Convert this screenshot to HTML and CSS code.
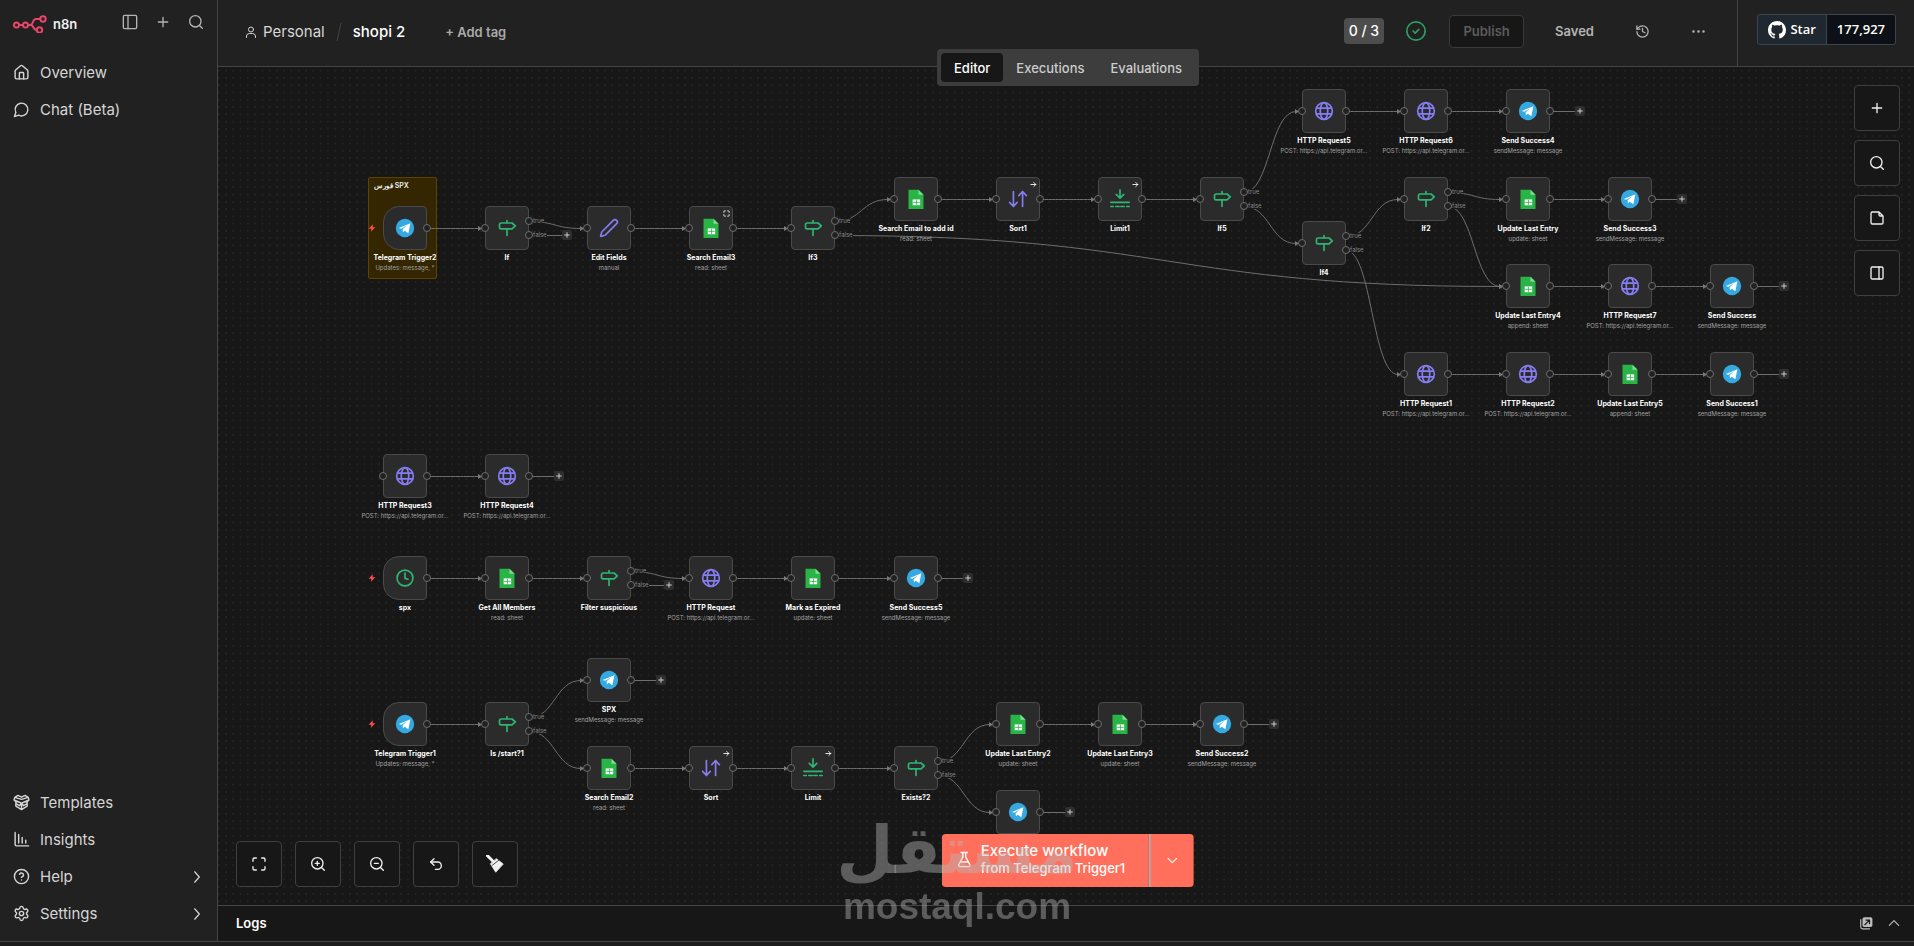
FILE: index.html
```html
<!DOCTYPE html>
<html lang="en">
<head>
<meta charset="utf-8">
<title>shopi 2 - n8n</title>
<meta name="viewport" content="width=device-width, initial-scale=1">
<link rel="stylesheet" href="styles.css">
</head>
<body>
<svg class="sprite" aria-hidden="true">
  <symbol id="i-panel" viewBox="0 0 24 24"><rect x="2" y="2" width="20" height="20" rx="2"/><path d="M9 2v20"/></symbol>
  <symbol id="i-panel-right" viewBox="0 0 24 24"><rect x="3" y="3" width="18" height="18" rx="2"/><path d="M15 3v18"/></symbol>
  <symbol id="i-plus" viewBox="0 0 24 24"><path d="M5 12h14M12 5v14"/></symbol>
  <symbol id="i-search" viewBox="0 0 24 24"><circle cx="11" cy="11" r="8.5"/><path d="m21.5 21.5-4.3-4.3"/></symbol>
  <symbol id="i-home" viewBox="0 0 24 24"><path d="M15 21v-8a1 1 0 0 0-1-1h-4a1 1 0 0 0-1 1v8"/><path d="M3 10a2 2 0 0 1 .7-1.5l7-6a2 2 0 0 1 2.6 0l7 6A2 2 0 0 1 21 10v9a2 2 0 0 1-2 2H5a2 2 0 0 1-2-2z"/></symbol>
  <symbol id="i-chat" viewBox="0 0 24 24"><path d="M7.9 20A9 9 0 1 0 4 16.1L2 22Z"/></symbol>
  <symbol id="i-box" viewBox="0 0 24 24"><path d="M12 13v9M2.5 9.5 12 13l9.500-3.500M12 7.500 2.500 4.800 7 2l5 2.500L17 2l4.500 2.800zM2.500 4.800 1.500 8.500 12 13 22.500 8.500l-1-3.700M4 10v7l8 5 8-5v-7M4 13.500l5 3 3-3.500 3 3.500 5-3"/></symbol>
  <symbol id="i-chart" viewBox="0 0 24 24"><path d="M3 2v17a2 2 0 0 0 2 2h17M8 17V5M13 17V9M18 17v-4"/></symbol>
  <symbol id="i-help" viewBox="0 0 24 24"><circle cx="12" cy="12" r="10"/><path d="M9.100 9a3 3 0 0 1 5.800 1c0 2-3 3-3 3M12 17h.01"/></symbol>
  <symbol id="i-gear" viewBox="0 0 24 24"><path d="M9.700 4.100a2.340 2.340 0 0 1 4.660 0 2.340 2.340 0 0 0 3.320 1.900 2.340 2.340 0 0 1 2.330 4.030 2.340 2.340 0 0 0 0 3.830 2.340 2.340 0 0 1-2.330 4.030 2.340 2.340 0 0 0-3.320 1.920 2.340 2.340 0 0 1-4.660 0 2.340 2.340 0 0 0-3.320-1.920 2.340 2.340 0 0 1-2.330-4.030 2.340 2.340 0 0 0 0-3.830A2.340 2.340 0 0 1 6.380 6a2.340 2.340 0 0 0 3.320-1.900"/><circle cx="12" cy="12" r="3"/></symbol>
  <symbol id="i-right" viewBox="0 0 24 24"><path d="m8 3 8 9-8 9"/></symbol>
  <symbol id="i-down" viewBox="0 0 24 24"><path d="m4 8 8 8 8-8"/></symbol>
  <symbol id="i-up" viewBox="0 0 24 24"><path d="m4 16 8-8 8 8"/></symbol>
  <symbol id="i-user" viewBox="0 0 24 24"><circle cx="12" cy="7" r="5"/><path d="M3 23v-3a6 6 0 0 1 6-5h6a6 6 0 0 1 6 5v3"/></symbol>
  <symbol id="i-check" viewBox="0 0 24 24"><circle cx="12" cy="12" r="11"/><path d="m8.500 12 2.500 2.500 4.500-4.500"/></symbol>
  <symbol id="i-history" viewBox="0 0 24 24"><path d="M3 12a9 9 0 1 0 9-9 9.750 9.750 0 0 0-6.740 2.740L3 8"/><path d="M3 3v5h5M12 7v5l4 2"/></symbol>
  <symbol id="i-dots" viewBox="0 0 24 24"><circle cx="4" cy="12" r="1"/><circle cx="12" cy="12" r="1"/><circle cx="20" cy="12" r="1"/></symbol>
  <symbol id="i-github" viewBox="0 0 16 16"><path fill="currentColor" stroke="none" d="M8 0c4.42 0 8 3.58 8 8a8.013 8.013 0 0 1-5.45 7.59c-.4.08-.55-.17-.55-.38 0-.27.01-1.13.01-2.2 0-.75-.25-1.23-.54-1.48 1.78-.2 3.65-.88 3.65-3.95 0-.88-.31-1.59-.82-2.15.08-.2.36-1.02-.08-2.12 0 0-.67-.22-2.2.82-.64-.18-1.32-.27-2-.27-.68 0-1.36.09-2 .27-1.53-1.03-2.2-.82-2.2-.82-.44 1.1-.16 1.92-.08 2.12-.51.56-.82 1.28-.82 2.15 0 3.06 1.86 3.75 3.64 3.95-.23.2-.44.55-.51 1.07-.46.21-1.61.55-2.33-.66-.15-.24-.6-.83-1.23-.82-.67.01-.27.38.01.53.34.19.73.9.82 1.13.16.45.68 1.31 2.69.94 0 .67.01 1.3.01 1.49 0 .21-.15.45-.55.38A7.995 7.995 0 0 1 0 8c0-4.42 3.58-8 8-8Z"/></symbol>
  <symbol id="i-note" viewBox="0 0 24 24"><path d="M15 3H5a2 2 0 0 0-2 2v14a2 2 0 0 0 2 2h14a2 2 0 0 0 2-2V9zM15 3v4a2 2 0 0 0 2 2h4"/></symbol>
  <symbol id="i-expand" viewBox="0 0 24 24"><path d="M3 8V5a2 2 0 0 1 2-2h3M16 3h3a2 2 0 0 1 2 2v3M21 16v3a2 2 0 0 1-2 2h-3M8 21H5a2 2 0 0 1-2-2v-3"/></symbol>
  <symbol id="i-zoom-in" viewBox="0 0 24 24"><circle cx="11" cy="11" r="8.500"/><path d="m21.500 21.500-4.300-4.300M11 8v6M8 11h6"/></symbol>
  <symbol id="i-zoom-out" viewBox="0 0 24 24"><circle cx="11" cy="11" r="8.500"/><path d="m21.500 21.500-4.300-4.300M8 11h6"/></symbol>
  <symbol id="i-undo" viewBox="0 0 24 24"><path d="M9 14 4 9l5-5"/><path d="M4 9h10.500a5.500 5.500 0 0 1 0 11H11"/></symbol>
  <symbol id="i-broom" viewBox="0 0 24 24"><path d="m2 1 7 7" stroke-width="4"/><path d="m6 12 7 11 10-11-9-7z" fill="currentColor" stroke-width="1"/><path d="m8 14 9-7" class="broom-gap"/></symbol>
  <symbol id="i-flask" viewBox="0 0 24 24"><path d="M14 2v6a2 2 0 0 0 .245.960l5.510 10.080A2 2 0 0 1 18 22H6a2 2 0 0 1-1.755-2.960l5.510-10.080A2 2 0 0 0 10 8V2M6.500 15.500h11M7.500 2h9"/></symbol>
  <symbol id="i-popout" viewBox="0 0 24 24"><path d="M3 6v13a3 3 0 0 0 3 3h12"/><rect x="6" y="2" width="17" height="17" rx="3" fill="currentColor" stroke="none"/><path class="popout-arrow" d="m10 15 8-8M12 7h6v6"/></symbol>
  <symbol id="i-bolt" viewBox="0 0 24 24"><path fill="currentColor" stroke="none" d="M14 1 2 14h8l-1 9 13-13h-8z"/></symbol>
  <symbol id="i-arrow" viewBox="0 0 24 24"><path d="M3 12h17M13 5l7 7-7 7"/></symbol>
  <symbol id="n-if" viewBox="0 0 24 24"><path d="M18 6H5a2 2 0 0 0-2 2v3a2 2 0 0 0 2 2h13l4-3.500zM12 13v8M12 3v3"/></symbol>
  <symbol id="n-http" viewBox="0 0 24 24"><circle cx="12" cy="12" r="10"/><ellipse cx="12" cy="12" rx="4.500" ry="10"/><path d="M3 8.500h18M3 15.500h18"/></symbol>
  <symbol id="n-edit" viewBox="0 0 24 24"><path d="M21.200 6.800a1 1 0 0 0-4-4L3.800 16.200a2 2 0 0 0-.5.800l-1.300 4.400a.5.500 0 0 0 .6.600l4.400-1.300a2 2 0 0 0 .8-.5z"/></symbol>
  <symbol id="n-sort" viewBox="0 0 24 24"><path d="m2 16 4.500 5 4.500-5M6.500 20V3M22 8l-4.500-5L13 8M17.500 4v17"/></symbol>
  <symbol id="n-limit" viewBox="0 0 24 24"><path d="M12 1v9M7.500 6.500 12 11l4.500-4.500M1 16h22M1 21h3M7 21h4M13 21h4M20 21h3"/></symbol>
  <symbol id="n-clock" viewBox="0 0 24 24"><circle cx="12" cy="12" r="9.500"/><path d="M12 6v6.500l3.500 1"/></symbol>
  <symbol id="n-telegram" viewBox="0 0 24 24"><circle cx="12" cy="12" r="11" fill="#35a9e1" stroke="none"/><path d="M4.500 12 18.500 6.200 16 18.200l-4.300-3-2.200 2-.4-3.800 6-5-7.500 4.500z" fill="#fff" stroke="none"/></symbol>
  <symbol id="n-sheet" viewBox="0 0 24 24"><path d="M3 1h12l6 6v17H3z" fill="#28b446" stroke="none"/><path d="m15 1 6 6h-6z" fill="#7fdc93" stroke="none"/><path d="M8 12.500h9v7H8z" fill="#fff" stroke="none"/><path d="M9 16h7M12.500 13.500v5" stroke="#28b446" stroke-width="1"/></symbol>
</svg>

<div class="app">
  <aside class="sidebar">
    <div class="brand">
      <svg class="brand-mark" viewBox="0 0 34 18" aria-hidden="true"><circle cx="3.500" cy="10" r="2.500"/><circle cx="12.500" cy="10" r="2.500"/><circle cx="30" cy="4" r="2.700"/><circle cx="26.500" cy="15" r="2.700"/><path d="M6 10h4M15 10h2c4 0 2-6 6-6h4.300M17.500 10c4 0 2 5 6.300 5"/></svg>
      <span class="brand-name">n8n</span>
      <div class="brand-tools">
        <button class="plain" aria-label="Toggle sidebar"><svg class="icon"><use href="#i-panel"/></svg></button>
        <button class="plain" aria-label="Add"><svg class="icon"><use href="#i-plus"/></svg></button>
        <button class="plain" aria-label="Search"><svg class="icon"><use href="#i-search"/></svg></button>
      </div>
    </div>
    <nav class="menu menu-top">
      <a href="#overview"><svg class="icon"><use href="#i-home"/></svg>Overview</a>
      <a href="#chat"><svg class="icon"><use href="#i-chat"/></svg>Chat (Beta)</a>
    </nav>
    <nav class="menu menu-bottom">
      <a href="#templates"><svg class="icon"><use href="#i-box"/></svg>Templates</a>
      <a href="#insights"><svg class="icon"><use href="#i-chart"/></svg>Insights</a>
      <a href="#help"><svg class="icon"><use href="#i-help"/></svg>Help<svg class="icon chevron"><use href="#i-right"/></svg></a>
      <a href="#settings"><svg class="icon"><use href="#i-gear"/></svg>Settings<svg class="icon chevron"><use href="#i-right"/></svg></a>
    </nav>
  </aside>

  <main class="main">
    <header class="header">
      <div class="crumbs">
        <a class="project" href="#personal"><svg class="icon"><use href="#i-user"/></svg>Personal</a>
        <svg class="slash" viewBox="0 0 6 20" aria-hidden="true"><path d="M5 1 1 19"/></svg>
        <span class="workflow-name">shopi 2</span>
        <button class="plain add-tag">+ Add tag</button>
      </div>
      <div class="actions">
        <span class="count">0 / 3</span>
        <svg class="icon status"><use href="#i-check"/></svg>
        <button class="publish" disabled>Publish</button>
        <span class="saved">Saved</span>
        <button class="plain" aria-label="History"><svg class="icon"><use href="#i-history"/></svg></button>
        <button class="plain" aria-label="More"><svg class="icon dots"><use href="#i-dots"/></svg></button>
      </div>
      <div class="github">
        <a class="star" href="#star"><svg class="icon octocat"><use href="#i-github"/></svg>Star</a><a class="stars" href="#stargazers">177,927</a>
      </div>
      <div class="tabs" role="tablist">
        <button role="tab" aria-selected="true" class="tab active">Editor</button>
        <button role="tab" class="tab">Executions</button>
        <button role="tab" class="tab">Evaluations</button>
      </div>
    </header>

    <section class="canvas" aria-label="Workflow canvas">
      <svg class="grid" aria-hidden="true">
        <defs><pattern id="dots" width="16" height="16" patternUnits="userSpaceOnUse" patternTransform="translate(-3 0) scale(.4554)"><circle cx="8" cy="8" r="1.300"/></pattern></defs>
        <rect width="100%" height="100%" fill="url(#dots)"/>
      </svg>
      <div class="sticky"><strong dir="ltr">فورس SPX</strong></div>
      <svg class="edges" id="edges" aria-hidden="true">
        <defs><marker id="tip" viewBox="0 0 4 5" refX="1" refY="2.500" markerWidth="4" markerHeight="5" markerUnits="userSpaceOnUse"><path d="M0 0 4 2.500 0 5z"/></marker></defs>
      </svg>
      <div id="nodes"></div>

      <div class="rail">
        <button class="tool" aria-label="Add node"><svg class="icon"><use href="#i-plus"/></svg></button>
        <button class="tool" aria-label="Search nodes"><svg class="icon"><use href="#i-search"/></svg></button>
        <button class="tool" aria-label="Add note"><svg class="icon"><use href="#i-note"/></svg></button>
        <button class="tool" aria-label="Toggle panel"><svg class="icon"><use href="#i-panel-right"/></svg></button>
      </div>
      <div class="view-tools">
        <button class="tool" aria-label="Fit view"><svg class="icon"><use href="#i-expand"/></svg></button>
        <button class="tool" aria-label="Zoom in"><svg class="icon"><use href="#i-zoom-in"/></svg></button>
        <button class="tool" aria-label="Zoom out"><svg class="icon"><use href="#i-zoom-out"/></svg></button>
        <button class="tool" aria-label="Undo"><svg class="icon"><use href="#i-undo"/></svg></button>
        <button class="tool" aria-label="Tidy up"><svg class="icon broom"><use href="#i-broom"/></svg></button>
      </div>
      <div class="execute">
        <button class="run"><svg class="icon"><use href="#i-flask"/></svg><span><b>Execute workflow</b><small>from Telegram Trigger1</small></span></button>
        <button class="run-more" aria-label="Choose trigger"><svg class="icon"><use href="#i-down"/></svg></button>
      </div>
    </section>

    <footer class="logs">
      <h2>Logs</h2>
      <button class="plain" aria-label="Pop out"><svg class="icon popout"><use href="#i-popout"/></svg></button>
      <button class="plain" aria-label="Expand"><svg class="icon"><use href="#i-up"/></svg></button>
    </footer>
  </main>
</div>
<div class="bottom-strip"></div>
<div class="watermark" aria-hidden="true"><span class="wm-ar" lang="ar">مستقل</span><span class="wm-en">mostaql.com</span></div>
<script src="canvas.js"></script>
</body>
</html>
```

FILE: styles.css
```css
* { box-sizing: border-box; }

body {
  margin: 0;
  height: 100vh;
  display: flex;
  flex-direction: column;
  overflow: hidden;
  background: #171717;
  color: #d6d6d6;
  font-family: Inter, "Liberation Sans", sans-serif;
  font-size: 13px;
}

button { font: inherit; color: inherit; cursor: pointer; }
a { color: inherit; text-decoration: none; }
.sprite { position: absolute; width: 0; height: 0; }

.icon {
  width: 16px;
  height: 16px;
  flex: none;
  display: block;
  fill: none;
  stroke: currentColor;
  stroke-width: 2;
  stroke-linecap: round;
  stroke-linejoin: round;
}

.plain { padding: 0; border: 0; background: none; }

.app { flex: 1; min-height: 0; display: flex; }
.bottom-strip { height: 5px; background: #1c1c1c; border-top: 1px solid #444; }

/* Sidebar */
.sidebar {
  width: 218px;
  flex: none;
  display: flex;
  flex-direction: column;
  background: #212121;
  border-right: 1px solid #444;
}
.brand { display: flex; align-items: center; height: 48px; padding: 0 13px; }
.brand-mark { width: 34px; height: 18px; fill: none; stroke: #e8456b; stroke-width: 2; }
.brand-name { margin-left: 6px; color: #f0f0f0; font-weight: 600; }
.brand-tools { display: flex; gap: 17px; margin: 0 0 4px auto; color: #b4b4b4; }
.menu { display: flex; flex-direction: column; font-size: 15px; }
.menu a { display: flex; align-items: center; height: 37px; padding: 0 13px; gap: 10px; }
.menu .icon { width: 17px; height: 17px; }
.menu-top { margin: 6px 0 auto; }
.menu-bottom { margin-bottom: 9px; }
.menu .chevron { margin-left: auto; width: 14px; height: 14px; }

/* Header */
.main { flex: 1; min-width: 0; display: flex; flex-direction: column; }
.header {
  position: relative;
  z-index: 2;
  height: 67px;
  flex: none;
  display: flex;
  align-items: stretch;
  background: #212121;
  border-bottom: 1px solid #444;
}
.crumbs { display: flex; align-items: center; padding: 0 0 3px 27px; font-size: 15px; }
.project { display: flex; align-items: center; gap: 6px; }
.project .icon { width: 12px; height: 12px; }
.slash { width: 6px; height: 20px; margin: 0 11px; fill: none; stroke: #444; stroke-width: 1; }
.workflow-name { color: #fff; font-weight: 500; }
.add-tag { margin-left: 40px; color: #aaa; font-size: 13px; font-weight: 600; }
.actions { display: flex; align-items: center; margin-left: auto; padding: 0 31px 4px 0; color: #b4b4b4; font-weight: 600; }
.count { padding: 0 5px; height: 26px; line-height: 26px; border-radius: 4px; background: #4d4d4d; color: #fff; font-weight: 500; font-size: 14px; }
.status { width: 20px; height: 20px; margin: 0 23px 0 22px; color: #2f9e62; }
.publish { width: 75px; height: 33px; padding: 0; border: 1px solid #3a3a3a; border-radius: 4px; background: #171717; color: #5c5c5c; cursor: default; }
.saved { margin: 0 41px 0 31px; }
.actions .icon:not(.status) { width: 15px; height: 15px; }
.actions .dots { margin-left: 41px; }
.github {
  width: 177px;
  display: flex;
  align-items: flex-start;
  justify-content: flex-end;
  padding: 14px 18px 0 0;
  border-left: 1px solid #444;
  color: #fff;
  font: 600 13px/29px "Open Sans", "Noto Sans", sans-serif;
}
.star, .stars { display: flex; align-items: center; border: 1px solid #3d444d; padding: 0 10px; }
.star { gap: 4px; border-radius: 3px 0 0 3px; background: #1f2731; }
.stars { margin-left: -1px; border-radius: 0 3px 3px 0; background: #0d1117; }
.octocat { width: 18px; height: 18px; }

.tabs {
  position: absolute;
  left: calc(50% + 2px);
  top: 49px;
  transform: translateX(-50%);
  display: flex;
  padding: 4px;
  border-radius: 4px;
  background: #3d3d3d;
}
.tab { height: 29px; padding: 0 13px; border: 0; border-radius: 4px; background: none; color: #ccc; font-weight: 500; }
.tab.active { background: #171717; color: #fff; }

/* Canvas */
.canvas { position: relative; flex: 1; min-height: 0; overflow: hidden; background: #171717; }
.grid, .edges { position: absolute; inset: 0; width: 100%; height: 100%; }
.grid circle { fill: #3a3a3a; }
.edges .line { fill: none; stroke: #6e6e6e; stroke-width: 1; }
.edges marker path { fill: #7a7a7a; }

.sticky {
  position: absolute;
  left: 150px;
  top: 110px;
  width: 69px;
  height: 102px;
  padding: 3px 5px;
  border: 1px solid #594400;
  border-radius: 2px;
  background: #332600;
  color: #eee;
  font-size: 7px;
  line-height: 10px;
}
.sticky strong { font-weight: 600; }

.node {
  position: absolute;
  width: 102px;
  margin: -22px 0 0 -51px;
  display: flex;
  flex-direction: column;
  align-items: center;
  text-align: center;
  white-space: nowrap;
}
.shape {
  position: relative;
  width: 44px;
  height: 44px;
  display: grid;
  place-items: center;
  border: 1px solid #4a4a4a;
  border-radius: 4px;
  background: #2b2b2b;
}
.shape > .icon { width: 20px; height: 20px; }
.trigger { border-radius: 16px 4px 4px 16px; }
.green { color: #2fb673; }
.violet { color: #857df0; }
.title { margin-top: 3px; color: #fff; font-size: 7px; line-height: 10px; font-weight: 700; }
.sub { color: #a0a0a0; font-size: 6px; line-height: 9px; }
.port {
  position: absolute;
  width: 8px;
  height: 8px;
  border: 1px solid #6e6e6e;
  border-radius: 50%;
  background: #212121;
}
.port.in { left: -5px; top: 17px; }
.port.out { right: -5px; top: 17px; }
.port.yes { right: -5px; top: 10px; }
.port.no { right: -5px; top: 24px; }
.shape > .bolt { position: absolute; left: -16px; top: 17px; width: 8px; height: 8px; color: #ff4d4d; }
.shape > .badge { position: absolute; right: 2px; top: 3px; width: 7px; height: 7px; color: #fff; stroke-width: 3; }
.branch { position: absolute; left: 47px; color: #8a8a8a; font-size: 6px; line-height: 6px; background: #171717; }
.branch.yes { top: 11px; }
.branch.no { top: 25px; }
.add {
  position: absolute;
  width: 10px;
  height: 10px;
  margin: -5px 0 0 -5px;
  padding: 1px;
  border: 0;
  border-radius: 2px;
  background: #2e2e2e;
  color: #ccc;
}
.add .icon { width: 8px; height: 8px; stroke-width: 3; }

.tool { width: 46px; height: 46px; display: grid; place-items: center; padding: 0; border: 1px solid #3f3f3f; border-radius: 4px; background: #171717; color: #f0f0f0; }
.tool .icon { width: 16px; height: 16px; }
.tool .broom { width: 18px; height: 18px; }
.broom-gap { stroke: #171717; stroke-width: 1; }
.rail { position: absolute; top: 18px; right: 14px; display: grid; gap: 9px; }
.view-tools { position: absolute; left: 18px; bottom: 18px; display: flex; gap: 13px; }

.execute { position: absolute; left: calc(50% + 2px); bottom: 18px; transform: translateX(-50%); display: flex; height: 53px; border-radius: 4px; overflow: hidden; color: #fff; }
.run, .run-more { display: flex; align-items: center; border: 0; background: #ff6f5c; }
.run { gap: 8px; padding: 0 24px 2px 14px; text-align: left; }
.run b, .run small { display: block; font-weight: 500; }
.run b { font-size: 15px; line-height: 18px; }
.run small { font-size: 13px; line-height: 17px; }
.run .icon { width: 17px; height: 17px; }
.run-more { width: 45px; justify-content: center; border-left: 2px solid #bba6a2; padding: 0; }
.run-more .icon { width: 13px; height: 13px; }

.watermark {
  position: fixed;
  left: 50%;
  bottom: 17px;
  transform: translateX(-50%);
  display: flex;
  flex-direction: column;
  align-items: center;
  color: rgb(183 183 183 / 43%);
  white-space: nowrap;
  pointer-events: none;
  z-index: 5;
}
.wm-ar { font: 700 66px/68px "DejaVu Sans", sans-serif; }
.wm-en { font: 700 37px/44px "Liberation Sans", sans-serif; }

/* Logs */
.logs { height: 36px; flex: none; display: flex; align-items: center; gap: 14px; padding: 0 13px 2px 18px; border-top: 1px solid #444; color: #bbb; }
.logs h2 { flex: 1; margin: 0; color: #fff; font-size: 13px; font-weight: 600; }
.logs .icon { width: 14px; height: 14px; }
.popout-arrow { stroke: #171717; }
```

FILE: canvas.js
```js
// Columns are spaced evenly; y is the centre of the node inside the canvas.
const COLUMN = 102.1;
const FIRST = 187;
const post = 'POST: https://api.telegram.or...';
const send = 'sendMessage: message';

// [id, column, y, kind, title, subtitle, options]
const nodes = [
  ['tt2', 0, 161, 'telegram', 'Telegram Trigger2', 'Updates: message, *', { trigger: true }],
  ['if', 1, 161, 'if', 'If', '', { addNo: true }],
  ['edit', 2, 161, 'edit', 'Edit Fields', 'manual'],
  ['se3', 3, 161, 'sheet', 'Search Email3', 'read: sheet', { badge: 'expand' }],
  ['if3', 4, 161, 'if', 'If3', ''],
  ['sea', 5, 132, 'sheet', 'Search Email to add id', 'read: sheet'],
  ['sort1', 6, 132, 'sort', 'Sort1', '', { badge: 'arrow' }],
  ['limit1', 7, 132, 'limit', 'Limit1', '', { badge: 'arrow' }],
  ['if5', 8, 132, 'if', 'If5', ''],
  ['h5', 9, 44, 'http', 'HTTP Request5', post],
  ['h6', 10, 44, 'http', 'HTTP Request6', post],
  ['s4', 11, 44, 'telegram', 'Send Success4', send, { add: true }],
  ['if4', 9, 176, 'if', 'If4', ''],
  ['if2', 10, 132, 'if', 'If2', ''],
  ['u', 11, 132, 'sheet', 'Update Last Entry', 'update: sheet'],
  ['s3', 12, 132, 'telegram', 'Send Success3', send, { add: true }],
  ['u4', 11, 219, 'sheet', 'Update Last Entry4', 'append: sheet'],
  ['h7', 12, 219, 'http', 'HTTP Request7', post],
  ['s', 13, 219, 'telegram', 'Send Success', send, { add: true }],
  ['h1', 10, 307, 'http', 'HTTP Request1', post],
  ['h2', 11, 307, 'http', 'HTTP Request2', post],
  ['u5', 12, 307, 'sheet', 'Update Last Entry5', 'append: sheet'],
  ['s1', 13, 307, 'telegram', 'Send Success1', send, { add: true }],
  ['h3', 0, 409, 'http', 'HTTP Request3', post],
  ['h4', 1, 409, 'http', 'HTTP Request4', post, { add: true }],
  ['spx', 0, 511, 'clock', 'spx', '', { trigger: true }],
  ['gam', 1, 511, 'sheet', 'Get All Members', 'read: sheet'],
  ['fs', 2, 511, 'if', 'Filter suspicious', '', { addNo: true }],
  ['h', 3, 511, 'http', 'HTTP Request', post],
  ['mark', 4, 511, 'sheet', 'Mark as Expired', 'update: sheet'],
  ['s5', 5, 511, 'telegram', 'Send Success5', send, { add: true }],
  ['tt1', 0, 657, 'telegram', 'Telegram Trigger1', 'Updates: message, *', { trigger: true }],
  ['is', 1, 657, 'if', 'Is /start?1', ''],
  ['SPX', 2, 613, 'telegram', 'SPX', send, { add: true }],
  ['se2', 2, 701, 'sheet', 'Search Email2', 'read: sheet'],
  ['sort', 3, 701, 'sort', 'Sort', '', { badge: 'arrow' }],
  ['limit', 4, 701, 'limit', 'Limit', '', { badge: 'arrow' }],
  ['ex', 5, 701, 'if', 'Exists?2', ''],
  ['u2', 6, 657, 'sheet', 'Update Last Entry2', 'update: sheet'],
  ['u3', 7, 657, 'sheet', 'Update Last Entry3', 'update: sheet'],
  ['s2', 8, 657, 'telegram', 'Send Success2', send, { add: true }],
  ['last', 6, 745, 'telegram', '', '', { add: true }],
];

// [from, to, branch offset]
const YES = -7;
const NO = 7;
const edges = [
  ['tt2', 'if', 0], ['if', 'edit', YES], ['edit', 'se3', 0], ['se3', 'if3', 0],
  ['if3', 'sea', YES], ['if3', 'u4', NO], ['sea', 'sort1', 0], ['sort1', 'limit1', 0],
  ['limit1', 'if5', 0], ['if5', 'h5', YES], ['if5', 'if4', NO], ['h5', 'h6', 0],
  ['h6', 's4', 0], ['if4', 'if2', YES], ['if4', 'h1', NO], ['if2', 'u', YES],
  ['if2', 'u4', NO], ['u', 's3', 0], ['u4', 'h7', 0], ['h7', 's', 0],
  ['h1', 'h2', 0], ['h2', 'u5', 0], ['u5', 's1', 0], ['h3', 'h4', 0],
  ['spx', 'gam', 0], ['gam', 'fs', 0], ['fs', 'h', YES], ['h', 'mark', 0],
  ['mark', 's5', 0], ['tt1', 'is', 0], ['is', 'SPX', YES], ['is', 'se2', NO],
  ['se2', 'sort', 0], ['sort', 'limit', 0], ['limit', 'ex', 0], ['ex', 'u2', YES],
  ['ex', 'last', NO], ['u2', 'u3', 0], ['u3', 's2', 0],
];

const tint = { if: 'green', limit: 'green', clock: 'green', http: 'violet', edit: 'violet', sort: 'violet' };
const icon = (id, cls = '') => `<svg class="icon ${cls}"><use href="#${id}"/></svg>`;
const place = {};
const lines = [];
let html = '';

for (const [id, col, y, kind, title, sub, opt = {}] of nodes) {
  const x = Math.round(FIRST + col * COLUMN);
  place[id] = { x, y };
  const ports = kind === 'if'
    ? '<i class="port yes"></i><i class="port no"></i><span class="branch yes">true</span><span class="branch no">false</span>'
    : '<i class="port out"></i>';
  html += `<div class="node" style="left:${x}px;top:${y}px">
    <div class="shape ${opt.trigger ? 'trigger' : ''}">
      ${icon('n-' + kind, tint[kind])}
      ${opt.trigger ? icon('i-bolt', 'bolt') : '<i class="port in"></i>'}
      ${ports}${opt.badge ? icon('i-' + opt.badge, 'badge') : ''}
    </div>
    ${title ? `<div class="title">${title}</div>` : ''}${sub ? `<div class="sub">${sub}</div>` : ''}
  </div>`;
  if (opt.add || opt.addNo) {
    const ax = x + (opt.addNo ? 60 : 52);
    const ay = y + (opt.addNo ? NO : 0);
    lines.push(`<path class="line" d="M${x + 22} ${ay + 0.5}H${ax}"/>`);
    html += `<button class="add" aria-label="Add next node" style="left:${ax}px;top:${ay}px">${icon('i-plus')}</button>`;
  }
}

for (const [from, to, offset] of edges) {
  const x1 = place[from].x + 22;
  const y1 = place[from].y + offset + 0.5;
  const x2 = place[to].x - 28;
  const y2 = place[to].y + 0.5;
  const mid = (x1 + x2) / 2;
  lines.push(`<path class="line" marker-end="url(#tip)" d="M${x1} ${y1}C${mid} ${y1} ${mid} ${y2} ${x2} ${y2}"/>`);
}

document.getElementById('edges').insertAdjacentHTML('beforeend', lines.join(''));
document.getElementById('nodes').innerHTML = html;
```
